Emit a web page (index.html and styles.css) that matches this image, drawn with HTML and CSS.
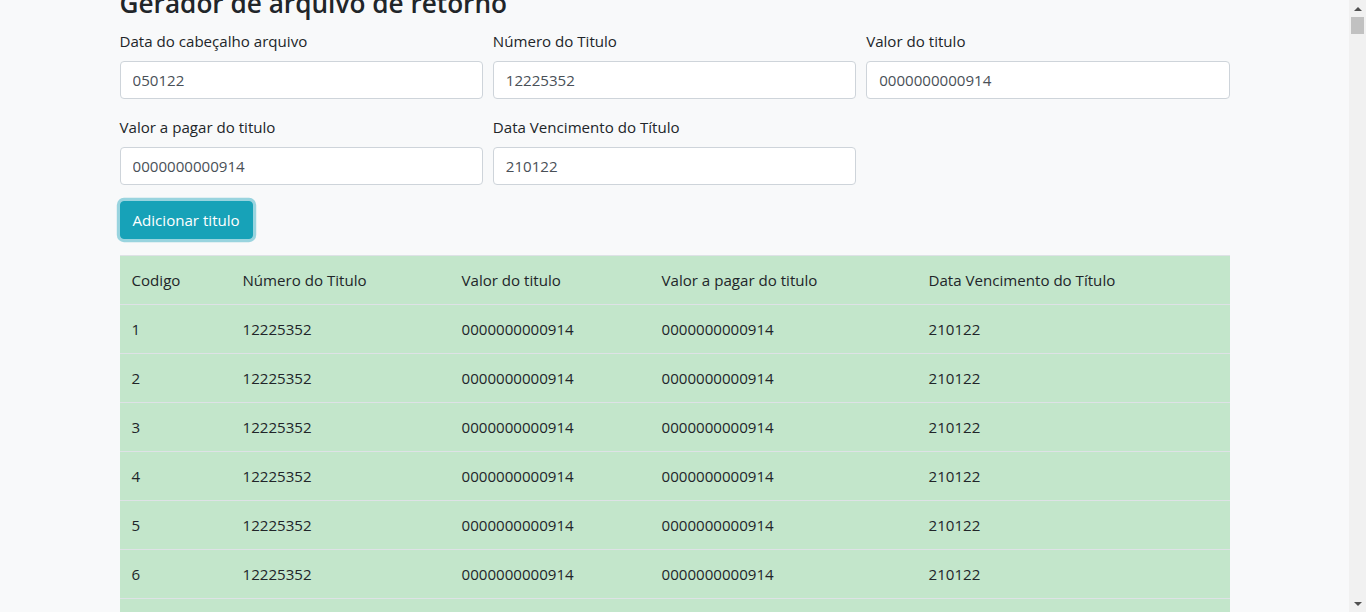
FILE: index.html
```html
<!DOCTYPE html>
<html lang="pt-BR">
<head>
<meta charset="utf-8">
<title>Gerador de arquivo de retorno</title>
<link rel="stylesheet" href="styles.css">
</head>
<body>
<div class="page">
  <div class="container">
    <h3 class="title">Gerador de arquivo de retorno</h3>
    <form class="form">
      <div class="form-row">
        <div class="form-group">
          <label class="label">Data do cabeçalho arquivo</label>
          <input class="input" type="text" value="050122">
        </div>
        <div class="form-group">
          <label class="label">Número do Titulo</label>
          <input class="input" type="text" value="12225352">
        </div>
        <div class="form-group">
          <label class="label">Valor do titulo</label>
          <input class="input" type="text" value="0000000000914">
        </div>
        <div class="form-group">
          <label class="label">Valor a pagar do titulo</label>
          <input class="input" type="text" value="0000000000914">
        </div>
        <div class="form-group">
          <label class="label">Data Vencimento do Título</label>
          <input class="input" type="text" value="210122">
        </div>
      </div>
      <button type="button" class="btn btn-focus">Adicionar titulo</button>
    </form>
    <table class="table">
      <thead>
        <tr>
          <th class="col-cod">Codigo</th>
          <th class="col-num">Número do Titulo</th>
          <th class="col-val">Valor do titulo</th>
          <th class="col-pag">Valor a pagar do titulo</th>
          <th class="col-venc">Data Vencimento do Título</th>
        </tr>
      </thead>
      <tbody id="rows">
        <tr><td>1</td><td>12225352</td><td>0000000000914</td><td>0000000000914</td><td>210122</td></tr>
        <tr><td>2</td><td>12225352</td><td>0000000000914</td><td>0000000000914</td><td>210122</td></tr>
        <tr><td>3</td><td>12225352</td><td>0000000000914</td><td>0000000000914</td><td>210122</td></tr>
        <tr><td>4</td><td>12225352</td><td>0000000000914</td><td>0000000000914</td><td>210122</td></tr>
        <tr><td>5</td><td>12225352</td><td>0000000000914</td><td>0000000000914</td><td>210122</td></tr>
        <tr><td>6</td><td>12225352</td><td>0000000000914</td><td>0000000000914</td><td>210122</td></tr>
        <tr><td>7</td><td>12225352</td><td>0000000000914</td><td>0000000000914</td><td>210122</td></tr>
      </tbody>
    </table>
  </div>
</div>
<div class="scrollbar" aria-hidden="true">
  <div class="sb-arrow sb-up"></div>
  <div class="sb-track"><div class="sb-thumb"></div></div>
  <div class="sb-arrow sb-down"></div>
</div>
<script src="script.js"></script>
</body>
</html>
```

FILE: styles.css
```css
html, body {
  margin: 0;
  padding: 0;
}
body {
  background: #f8f9fa;
  color: #212529;
  font-family: "Open Sans", "Noto Sans", "Liberation Sans", sans-serif;
  font-size: 15.1px;
  line-height: 1.5;
}
.page {
  padding-right: 17px;
}
.container {
  width: 1110px;
  margin: 0 auto;
  padding: 24px 15px 0;
}
.title {
  font-size: 26.2px;
  font-weight: 600;
  line-height: 33.6px;
  margin: 0 0 8px;
}
.form-row {
  display: grid;
  grid-template-columns: repeat(3, 1fr);
  column-gap: 10px;
}
.form-group {
  margin-bottom: 16px;
  min-width: 0;
}
.label {
  display: block;
  margin-bottom: 8px;
  line-height: 24px;
}
.input {
  display: block;
  box-sizing: border-box;
  width: 100%;
  height: 38px;
  padding: 6px 12px;
  font: inherit;
  line-height: 24px;
  color: #495057;
  background: #fff;
  border: 1px solid #ced4da;
  border-radius: 4px;
  outline: none;
}
.btn {
  display: block;
  height: 38px;
  padding: 6px 12px;
  font: inherit;
  line-height: 24px;
  color: #fff;
  background: #17a2b8;
  border: 1px solid #17a2b8;
  border-radius: 4px;
}
.btn-focus {
  box-shadow: 0 0 0 3.2px rgba(58, 176, 195, 0.5);
}
.table {
  width: 100%;
  margin-top: 16px;
  border-collapse: collapse;
  table-layout: fixed;
  background: #c3e6cb;
  color: #212529;
}
.table th,
.table td {
  padding: 12px;
  text-align: left;
  vertical-align: top;
  font-weight: 400;
  line-height: 24px;
  border-top: 1px solid #dee2e6;
  white-space: nowrap;
}
.col-cod { width: 87px; }
.col-num { width: 195px; }
.col-val { width: 176px; }
.col-pag { width: 243px; }
.col-venc { width: auto; }

/* window scrollbar, drawn over the right edge */
.scrollbar {
  position: fixed;
  top: 0;
  right: 0;
  bottom: 0;
  width: 17px;
  background: #f1f1f1;
  display: flex;
  flex-direction: column;
}
.sb-arrow {
  height: 17px;
  flex: none;
  display: flex;
  align-items: center;
  justify-content: center;
}
.sb-up::before,
.sb-down::before {
  content: "";
  width: 0;
  height: 0;
  border-left: 4px solid transparent;
  border-right: 4px solid transparent;
}
.sb-up::before {
  border-bottom: 4px solid #505050;
}
.sb-down::before {
  border-top: 4px solid #505050;
}
.sb-track {
  flex: 1;
  padding: 0 2px;
}
.sb-thumb {
  height: 17px;
  background: #c1c1c1;
}
```

FILE: script.js
```js
(function () {
  var body = document.getElementById('rows');
  var total = 420;
  for (var i = body.rows.length + 1; i <= total; i++) {
    var tr = document.createElement('tr');
    var vals = [String(i), '12225352', '0000000000914', '0000000000914', '210122'];
    for (var j = 0; j < vals.length; j++) {
      var td = document.createElement('td');
      td.textContent = vals[j];
      tr.appendChild(td);
    }
    body.appendChild(tr);
  }
  window.scrollTo(0, 37);
})();
```
